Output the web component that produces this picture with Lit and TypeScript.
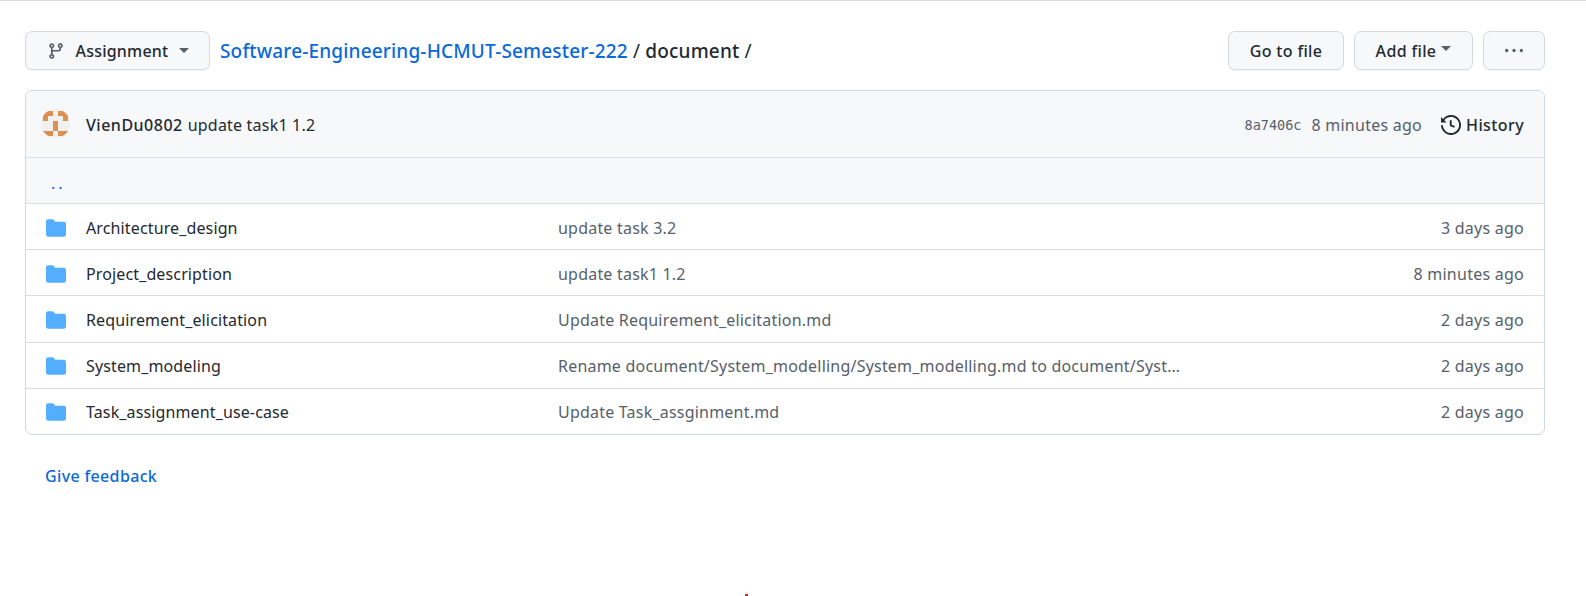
import { LitElement, html, css, svg } from "lit";
import { customElement } from "lit/decorators.js";

const FOLDER = "M1.75 1A1.75 1.75 0 0 0 0 2.75v10.5C0 14.216.784 15 1.75 15h12.5A1.75 1.75 0 0 0 16 13.25v-8.5A1.75 1.75 0 0 0 14.25 3H7.5a.25.25 0 0 1-.2-.1l-.9-1.2C6.07 1.26 5.55 1 5 1H1.75Z";
const rows = [
  ["Architecture_design", "update task 3.2", "3 days ago"],
  ["Project_description", "update task1 1.2", "8 minutes ago"],
  ["Requirement_elicitation", "Update Requirement_elicitation.md", "2 days ago"],
  ["System_modeling", "Rename document/System_modelling/System_modelling.md to document/Syst…", "2 days ago"],
  ["Task_assignment_use-case", "Update Task_assginment.md", "2 days ago"],
];
const cells = [[0,0],[1,0],[3,0],[4,0],[0,1],[4,1],[2,2],[2,3],[0,4],[1,4],[3,4],[4,4]];

@customElement("app-root")
export class AppRoot extends LitElement {
  static styles = css`
    :host { display: block; height: 596px; box-sizing: border-box; border-top: 1px solid #d8dee4; padding: 30px 41px 0 25px; font-family: "Noto Sans", sans-serif; font-size: 16px; color: #24292f; position: relative; background: #fff; overflow: hidden; }
    a { text-decoration: none; color: inherit; }
    .bar { display: flex; align-items: center; height: 39px; margin-bottom: 20px; }
    .btn { box-sizing: border-box; height: 39px; display: flex; align-items: center; justify-content: center; border: 1px solid #d5d9de; border-radius: 7px; background: #f6f8fa; font-weight: 500; letter-spacing: .35px; box-shadow: 0 1px 0 rgba(31,35,40,.04); }
    .branch { width: 185px; margin-right: 10px; padding-left: 1px; letter-spacing: .2px; }
    .branch svg { margin-right: 11px; color: #57606a; }
    .caret { width: 0; height: 0; border: 5.5px solid transparent; border-top-color: currentColor; border-bottom: 0; margin-left: 11px; }
    .branch .caret { color: #57606a; }
    .crumb { font-size: 19px; flex: 1; white-space: nowrap; letter-spacing: .17px; }
    .crumb a { color: #0969da; font-weight: 500; }
    .crumb b { font-weight: 500; }
    .goto { width: 116px; margin-right: 10px; }
    .add { width: 119px; margin-right: 10px; }
    .add .caret { margin-left: 5px; margin-bottom: 5px; color: #57606a; }
    .more { width: 62px; color: #57606a; }
    .box { border: 1px solid #d0d7de; border-radius: 7px; overflow: hidden; }
    .head { display: flex; align-items: center; padding: 2px 20px 0 15px; height: 64px; background: #f6f8fa; border-bottom: 1px solid #d8dee4; }
    .avatar { margin: -3px 16px 0 0; flex: none; }
    .author { font-weight: 500; margin-right: 5px; letter-spacing: .5px; }
    .subject { letter-spacing: .2px; }
    .spacer { flex: 1; }
    .sha { font-family: "DejaVu Sans Mono", monospace; font-size: 13.5px; color: #57606a; margin-right: 10px; }
    .when { color: #57606a; margin-right: 19px; letter-spacing: .25px; }
    .hist { display: flex; align-items: center; gap: 5px; font-weight: 500; letter-spacing: .4px; }
    .up { height: 45px; box-sizing: border-box; display: flex; align-items: center; padding: 4px 0 0 25px; background: #f6f8fa; color: #0969da; letter-spacing: 3px; }
    .row { display: grid; grid-template-columns: 512px 1fr auto; align-items: center; height: 46.2px; box-sizing: border-box; padding: 2px 20px 0; border-top: 1px solid #d8dee4; white-space: nowrap; }
    .name { display: flex; align-items: center; gap: 20px; letter-spacing: .13px; }
    .name svg { color: #54aeff; }
    .msg { color: #57606a; letter-spacing: .21px; }
    .age { color: #57606a; letter-spacing: .25px; }
    .feedback { display: block; margin: 30px 0 0 20px; color: #0969da; font-weight: 500; letter-spacing: .35px; }
    .dot { position: absolute; left: 745px; top: 593px; width: 3px; height: 2px; background: #e5212f; }
  `;

  render() {
    return html`
      <div class="bar">
        <div class="btn branch">
          <svg width="18" height="18" viewBox="0 0 16 16" fill="currentColor"><path d="M9.5 3.25a2.25 2.25 0 1 1 3 2.122V6A2.5 2.5 0 0 1 10 8.5H6a1 1 0 0 0-1 1v1.128a2.251 2.251 0 1 1-1.5 0V5.372a2.25 2.25 0 1 1 1.5 0v1.836A2.493 2.493 0 0 1 6 7h4a1 1 0 0 0 1-1v-.628A2.25 2.25 0 0 1 9.5 3.25Zm-6 0a.75.75 0 1 0 1.5 0 .75.75 0 0 0-1.5 0Zm8.25-.75a.75.75 0 1 0 0 1.5.75.75 0 0 0 0-1.5ZM4.25 12a.75.75 0 1 0 0 1.5.75.75 0 0 0 0-1.5Z"/></svg>
          <span>Assignment</span><i class="caret"></i>
        </div>
        <div class="crumb"><a href="#">Software-Engineering-HCMUT-Semester-222</a> / <b>document</b> /</div>
        <div class="btn goto">Go to file</div>
        <div class="btn add">Add file<i class="caret"></i></div>
        <div class="btn more">
          <svg width="24" height="18" viewBox="0 0 16 16" fill="currentColor"><path d="M8 9a1.5 1.5 0 1 0 0-3 1.5 1.5 0 0 0 0 3ZM1.5 9a1.5 1.5 0 1 0 0-3 1.5 1.5 0 0 0 0 3Zm13 0a1.5 1.5 0 1 0 0-3 1.5 1.5 0 0 0 0 3Z"/></svg>
        </div>
      </div>
      <div class="box">
        <div class="head">
          <svg class="avatar" width="29" height="29" viewBox="0 0 29 29">
            <defs><clipPath id="c"><circle cx="14.5" cy="14.5" r="14.5"/></clipPath></defs>
            <g clip-path="url(#c)"><rect width="29" height="29" fill="#f0f0f0"/>
            ${cells.map(([x, y]) => svg`<rect x=${2 + x * 5} y=${2 + y * 5} width="5" height="5" fill="#dd8f50"/>`)}</g>
          </svg>
          <span class="author">VienDu0802</span><span class="subject">update task1 1.2</span>
          <span class="spacer"></span>
          <span class="sha">8a7406c</span><span class="when">8 minutes ago</span>
          <span class="hist">
            <svg width="20" height="20" viewBox="0 0 16 16" fill="currentColor"><path d="m.427 1.927 1.215 1.215a8.002 8.002 0 1 1-1.6 5.685.75.75 0 1 1 1.493-.154 6.5 6.5 0 1 0 1.18-4.458l1.358 1.358A.25.25 0 0 1 3.896 6H.25A.25.25 0 0 1 0 5.75V2.104a.25.25 0 0 1 .427-.177ZM7.75 4a.75.75 0 0 1 .75.75v2.992l2.028.812a.75.75 0 0 1-.557 1.392l-2.5-1A.751.751 0 0 1 7 8.25v-3.5A.75.75 0 0 1 7.75 4Z"/></svg>
            History
          </span>
        </div>
        <div class="up"><a href="#">..</a></div>
        ${rows.map(([n, m, a]) => html`
          <div class="row">
            <div class="name"><svg width="20" height="20" viewBox="0 0 16 16" fill="currentColor"><path d=${FOLDER}/></svg><span>${n}</span></div>
            <div class="msg">${m}</div>
            <div class="age">${a}</div>
          </div>`)}
      </div>
      <a class="feedback" href="#">Give feedback</a>
      <div class="dot"></div>
    `;
  }
}
